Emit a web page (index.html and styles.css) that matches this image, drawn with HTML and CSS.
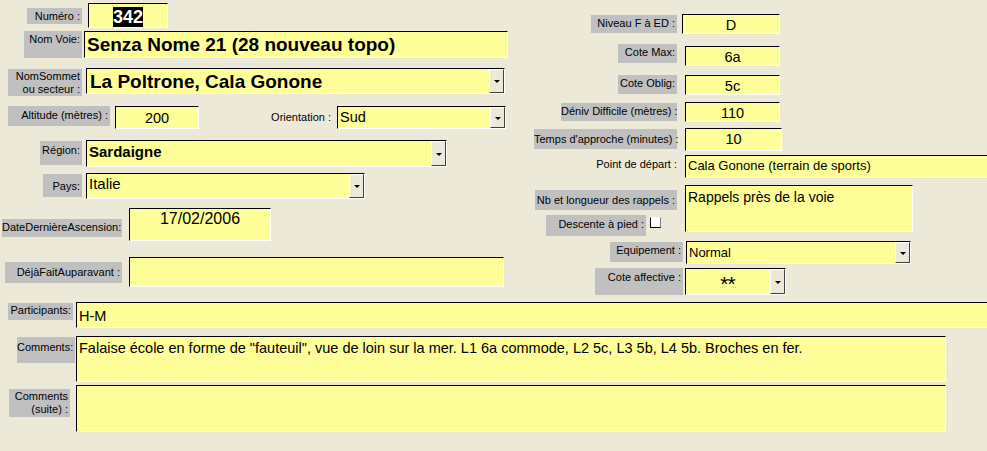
FILE: index.html
```html
<!DOCTYPE html>
<html lang="fr">
<head>
    <meta charset="UTF-8">
    <title>Fiche voie</title>
    <link rel="stylesheet" href="styles.css">
</head>
<body>
    <div class="form">
        <div class="top">
            <!-- Colonne gauche -->
            <div class="col-left">
                <div class="row h28">
                    <span class="lbl l-num">Numéro :</span>
                    <div class="fld f-num center bold18"><span class="sel">342</span></div>
                </div>
                <div class="row h37">
                    <span class="lbl l-voie">Nom Voie:</span>
                    <div class="fld f-voie bold18">Senza Nome 21 (28 nouveau topo)</div>
                </div>
                <div class="row h38">
                    <span class="lbl l-sommet">NomSommet<br>ou secteur :</span>
                    <div class="fld combo f-sommet bold18">La Poltrone, Cala Gonone<span class="drop"></span></div>
                </div>
                <div class="row h34">
                    <span class="lbl l-alt">Altitude (mètres) :</span>
                    <div class="fld f-alt center">200</div>
                    <span class="txt t-orient">Orientation :</span>
                    <div class="fld combo f-orient">Sud<span class="drop"></span></div>
                </div>
                <div class="row h33">
                    <span class="lbl l-region">Région:</span>
                    <div class="fld combo f-region bold15">Sardaigne<span class="drop"></span></div>
                </div>
                <div class="row h35">
                    <span class="lbl l-pays">Pays:</span>
                    <div class="fld combo f-pays">Italie<span class="drop"></span></div>
                </div>
                <div class="row h49">
                    <span class="lbl l-date">DateDernièreAscension:</span>
                    <div class="fld f-date center">17/02/2006</div>
                </div>
                <div class="row h45">
                    <span class="lbl l-deja">DéjàFaitAuparavant :</span>
                    <div class="fld f-deja"></div>
                </div>
            </div>

            <!-- Colonne droite -->
            <div class="col-right">
                <div class="row h30">
                    <span class="lbl l-niveau">Niveau F à ED :</span>
                    <div class="fld f-niveau center">D</div>
                </div>
                <div class="row h31">
                    <span class="lbl l-cote">Cote Max:</span>
                    <div class="fld f-small f-max center">6a</div>
                </div>
                <div class="row h27">
                    <span class="lbl l-cote">Cote Oblig:</span>
                    <div class="fld f-small center">5c</div>
                </div>
                <div class="row h26">
                    <span class="lbl l-deniv">Déniv Difficile (mètres) :</span>
                    <div class="fld f-small center">110</div>
                </div>
                <div class="row h27">
                    <span class="lbl l-temps">Temps d'approche (minutes) :</span>
                    <div class="fld f-small f-temps center">10</div>
                </div>
                <div class="row h30">
                    <span class="txt t-depart">Point de départ :</span>
                    <div class="fld f-depart">Cala Gonone (terrain de sports)</div>
                </div>
                <div class="row h56">
                    <div class="stack">
                        <span class="lbl l-rappels">Nb et longueur des rappels :</span>
                        <div class="pied">
                            <span class="lbl l-pied">Descente à pied :</span>
                            <span class="check"></span>
                        </div>
                    </div>
                    <div class="fld f-rappels">Rappels près de la voie</div>
                </div>
                <div class="row h27">
                    <span class="lbl l-equip">Equipement :</span>
                    <div class="fld combo f-equip">Normal<span class="drop"></span></div>
                </div>
                <div class="row h34">
                    <span class="lbl l-affect">Cote affective :</span>
                    <div class="fld combo f-affect"><span class="stars">**</span><span class="drop"></span></div>
                </div>
            </div>
        </div>

        <!-- Bas du formulaire -->
        <div class="bottom">
            <div class="row h34">
                <span class="lbl l-part">Participants:</span>
                <div class="fld f-part">H-M</div>
            </div>
            <div class="row h49">
                <span class="lbl l-comm">Comments:</span>
                <div class="fld f-comm">Falaise école en forme de "fauteuil", vue de loin sur la mer. L1 6a commode, L2 5c, L3 5b, L4 5b. Broches en fer.</div>
            </div>
            <div class="row">
                <span class="lbl l-suite">Comments<br>(suite) :</span>
                <div class="fld f-suite"></div>
            </div>
        </div>
    </div>
</body>
</html>
```
FILE: styles.css
```css
body {
    margin: 0;
    background-color: #ece9d8;
    font-family: "Liberation Sans", Arial, sans-serif;
    color: #000;
    overflow: hidden;
}

.form {
    width: 987px;
    height: 451px;
}

.top {
    display: grid;
    grid-template-columns: 530px 1fr;
    height: 302px;
}

.col-left {
    padding-top: 3px;
}

.col-right {
    padding-top: 14px;
}

.row {
    display: flex;
    align-items: flex-start;
}

.h26 { height: 26px; }
.h27 { height: 27px; }
.h28 { height: 28px; }
.h30 { height: 30px; }
.h31 { height: 31px; }
.h33 { height: 33px; }
.h34 { height: 34px; }
.h35 { height: 35px; }
.h37 { height: 37px; }
.h38 { height: 38px; }
.h45 { height: 45px; }
.h49 { height: 49px; }
.h56 { height: 56px; }

/* Etiquettes grises */
.lbl {
    flex: none;
    box-sizing: border-box;
    background-color: #c0c0c0;
    font-size: 11px;
    line-height: 13px;
    text-align: right;
    padding: 2px 2px 0 0;
    color: #000;
    white-space: nowrap;
}

.txt {
    flex: none;
    font-size: 11px;
    line-height: 13px;
    text-align: right;
    color: #000;
    white-space: nowrap;
}

/* Champs jaunes */
.fld {
    flex: none;
    position: relative;
    box-sizing: border-box;
    background-color: #ffff99;
    border: 1px solid;
    border-color: #000 #fff #fff #000;
    font-size: 14.5px;
    line-height: 18px;
    padding: 1px 0 0 2px;
    white-space: nowrap;
    overflow: hidden;
}

.center {
    text-align: center;
    padding-left: 0;
}

.bold18 {
    font-size: 19px;
    font-weight: bold;
    line-height: 22px;
    padding-top: 2px;
}

.bold15 {
    font-size: 15px;
    font-weight: bold;
}

.sel {
    background-color: #000;
    color: #fff;
    font-size: 18px;
}

/* Bouton de liste déroulante */
.drop {
    position: absolute;
    top: 0;
    right: 0;
    bottom: 0;
    width: 15px;
    box-sizing: border-box;
    background-color: #ece9d8;
    border: 1px solid;
    border-color: #fff #404040 #404040 #fff;
}

.drop::after {
    content: "";
    position: absolute;
    left: 4px;
    top: 50%;
    margin-top: -1px;
    border-left: 3px solid transparent;
    border-right: 3px solid transparent;
    border-top: 3px solid #000;
}

/* Colonne gauche */
.l-num { margin: 5px 0 0 27px; width: 55px; height: 16px; }
.f-num { margin-left: 6px; width: 80px; height: 25px; }

.l-voie { margin-left: 24px; width: 58px; height: 27px; }
.f-voie { margin-left: 2px; width: 424px; height: 27px; }

.l-sommet { margin: 1px 0 0 8px; width: 74px; height: 27px; padding-top: 1px; }
.f-sommet { margin-left: 4px; width: 419px; height: 26px; padding-left: 3px; }

.l-alt { margin-left: 8px; width: 102px; height: 20px; padding-top: 3px; }
.f-alt { margin-left: 5px; width: 84px; height: 23px; padding-top: 2px; }
.t-orient { margin: 5px 0 0 69px; width: 63px; }
.f-orient { margin-left: 6px; width: 169px; height: 23px; }

.l-region { margin: 1px 0 0 40px; width: 42px; height: 24px; padding-top: 3px; }
.f-region { margin-left: 4px; width: 361px; height: 27px; padding-top: 2px; }

.l-pays { margin: 1px 0 0 43px; width: 39px; height: 23px; padding-top: 6px; }
.f-pays { margin-left: 4px; width: 279px; height: 26px; font-size: 15px; }

.l-date { margin: 11px 0 0 2px; width: 120px; height: 18px; }
.f-date { margin-left: 7px; width: 142px; height: 33px; font-size: 16px; }

.l-deja { margin: 5px 0 0 5px; width: 117px; height: 21px; padding-top: 4px; }
.f-deja { margin-left: 7px; width: 375px; height: 30px; }

/* Colonne droite */
.l-niveau { margin: 1px 0 0 61px; width: 86px; height: 18px; }
.f-niveau { margin-left: 5px; width: 98px; height: 20px; }

.l-cote { margin-left: 88px; width: 59px; height: 19px; }
.f-small { margin-left: 8px; width: 95px; height: 20px; }
.f-max { margin-top: 2px; }

.l-deniv { margin: 1px 0 0 31px; width: 116px; height: 18px; }

.l-temps { margin: 1px 0 0 4px; width: 143px; height: 20px; padding-top: 4px; }
.f-temps { width: 97px; height: 23px; }

.t-depart { margin: 3px 0 0 57px; width: 90px; }
.f-depart { margin-left: 8px; width: 320px; height: 23px; border-right: none; font-size: 13px; }

.stack {
    flex: none;
    display: flex;
    flex-direction: column;
    width: 147px;
}
.l-rappels { margin: 5px 0 0 5px; width: 142px; height: 20px; padding-top: 4px; }
.pied { display: flex; align-items: flex-start; margin-top: 5px; }
.l-pied { margin-left: 16px; width: 100px; height: 21px; padding-top: 3px; }
.check {
    flex: none;
    width: 11px;
    height: 11px;
    box-sizing: border-box;
    margin: 2px 0 0 4px;
    background-color: #fff;
    border: 1px solid;
    border-color: #fff #808080 #000 #000;
}
.f-rappels { margin-left: 8px; width: 228px; height: 47px; font-size: 14px; padding-top: 2px; }

.l-equip { margin: 1px 0 0 80px; width: 73px; height: 20px; }
.f-equip { margin-left: 3px; width: 225px; height: 23px; font-size: 13px; padding-top: 2px; }

.l-affect { margin-left: 65px; width: 88px; height: 27px; padding-top: 3px; }
.f-affect { margin-left: 2px; width: 101px; height: 27px; padding: 0 16px 0 0; text-align: center; }
.stars { font-size: 21px; line-height: 30px; letter-spacing: -1px; }

/* Bas */
.l-part { margin: 1px 0 0 8px; width: 65px; height: 17px; padding-top: 1px; }
.f-part { margin-left: 3px; width: 920px; height: 26px; border-right: none; padding-top: 4px; }

.l-comm { margin: 1px 0 0 17px; width: 58px; height: 26px; padding-top: 4px; }
.f-comm { margin-left: 1px; width: 870px; height: 46px; padding-top: 2px; }

.l-suite { margin: 4px 0 0 9px; width: 61px; height: 28px; padding-top: 1px; }
.f-suite { margin-left: 6px; width: 870px; height: 47px; }
```
